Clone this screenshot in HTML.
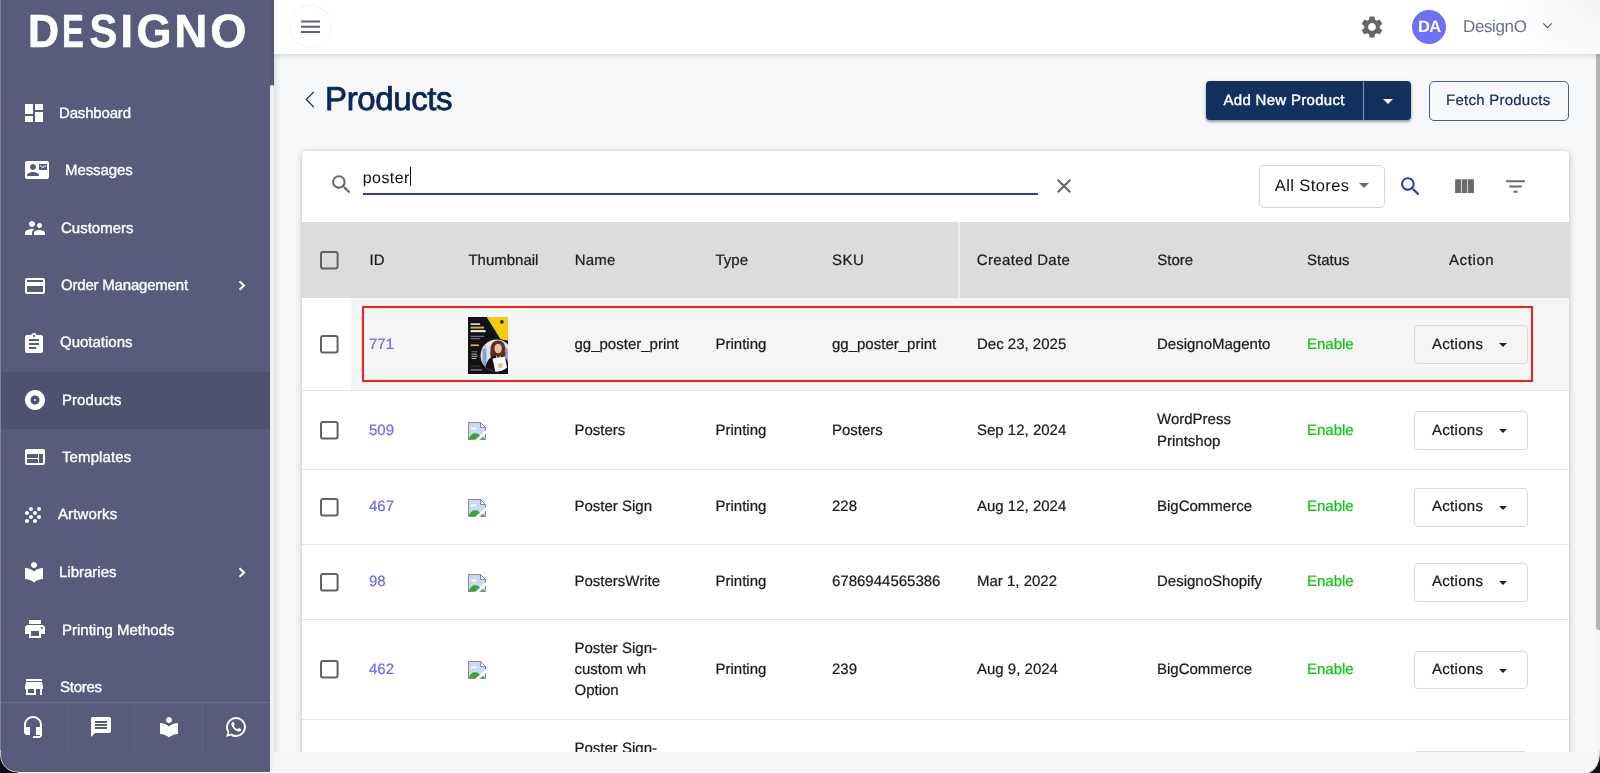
<!DOCTYPE html>
<html lang="en">
<head>
<meta charset="utf-8">
<title>Products - DesignO</title>
<style>
*{box-sizing:border-box;margin:0;padding:0}
html,body{width:1600px;height:773px;overflow:hidden;background:#fff}
body{font-family:"Liberation Sans",sans-serif;color:#212121;position:relative;text-rendering:geometricPrecision}
.abs{position:absolute}
svg{display:block}
/* sidebar */
#side{position:absolute;left:0;top:0;width:274px;height:773px;background:#585c7a;overflow:hidden}
#side .act{position:absolute;left:0;top:372px;width:270px;height:57px;background:#4e526f}
#side .lbl{will-change:transform;position:absolute;font-size:15px;line-height:20px;color:#fff;white-space:nowrap;-webkit-text-stroke:.35px #fff}
#side svg.ic{position:absolute;width:24px;height:24px;fill:#fff}
#side .thumb{position:absolute;left:270px;top:85px;width:4px;height:690px;background:#f1f1f3;border-radius:2px 2px 0 0}
#side .bar{position:absolute;left:0;top:702px;width:270px;height:50px;background:#585c7a;border-top:1px solid #6a6e8a}
#side .bar i{position:absolute;top:0;width:1px;height:50px;background:#606486}
/* topbar */
#top span{will-change:transform}
#top{position:absolute;left:274px;top:0;width:1326px;height:54px;background:radial-gradient(90px 80px at 100% 0,#f3f3f3,#fff);box-shadow:0 1px 6px rgba(0,0,0,.16)}
#main{position:absolute;left:274px;top:54px;width:1326px;height:698px;background:#f7f8fa;overflow:hidden}
#foot{position:absolute;left:274px;top:752px;width:1326px;height:21px;background:#f5f5f5}
#layer{position:absolute;left:0;top:0;width:1600px;height:752px;overflow:hidden;will-change:transform}
#ttl{left:325px;top:79.500px;font-size:33px;line-height:38px;color:#0c2659;white-space:nowrap;-webkit-text-stroke:.85px #0c2659;letter-spacing:-.38px}
#addb{left:1206px;top:81px;width:205px;height:39px;background:#13315f;border-radius:4px;box-shadow:0 2px 3px rgba(0,0,0,.3),0 1px 4px rgba(0,0,0,.15)}
#addb span{position:absolute;left:17.500px;top:9px;font-size:15px;line-height:21px;color:#fff;white-space:nowrap;-webkit-text-stroke:.4px #fff;letter-spacing:.3px}
#addb i{position:absolute;left:157px;top:0;width:1px;height:39px;background:#8a97b3}
#addb b{position:absolute;left:176.500px;top:17.500px;width:0;height:0;border-left:5.200px solid transparent;border-right:5.200px solid transparent;border-top:5.500px solid #fff}
#fetchb{left:1428.500px;top:81px;width:140.500px;height:39.500px;border:1px solid #4a5d8a;border-radius:5px}
#fetchb span{position:absolute;left:16.500px;top:8px;font-size:15px;line-height:21px;color:#0f2a5c;white-space:nowrap;letter-spacing:.25px;-webkit-text-stroke:.2px #0f2a5c}
#q{left:362.800px;top:168px;font-size:16px;line-height:21px;color:#111;letter-spacing:.42px}
#alls{left:1274.800px;top:175.500px;font-size:16.500px;line-height:20px;color:#131313;letter-spacing:.4px;white-space:nowrap}
/* card */
#card{position:absolute;left:302px;top:151px;width:1267px;height:640px;background:#fff;border-radius:4px 4px 0 0;box-shadow:0 2px 9px rgba(0,0,0,.2),0 0 2px rgba(0,0,0,.16)}
.t{position:absolute;margin-top:1px;white-space:nowrap;font-size:15px;line-height:21px;color:#1a1a1a;-webkit-text-stroke:.22px}
.id{color:#6b6bf0}
.en{color:#10c510}
.hr{position:absolute;left:302px;width:1267px;height:1px;background:#e5e5e5}
.cb{position:absolute;width:18.600px;height:18.600px;border:2px solid #626262;border-radius:3px}
.actb{position:absolute;left:1414px;width:113.500px;height:38.500px;border:1px solid #dadada;border-radius:4px;background:transparent}
.actb span{position:absolute;margin-top:1px;left:17px;top:8px;font-size:15px;line-height:21px;color:#1a1a1a;-webkit-text-stroke:.22px;letter-spacing:.3px}
.actb b{position:absolute;left:83.500px;top:17px;width:0;height:0;border-left:4.700px solid transparent;border-right:4.700px solid transparent;border-top:4.800px solid #222}
</style>
</head>
<body>
<div id="main"><div class="abs" style="left:0;top:0;width:7px;height:698px;background:linear-gradient(90deg,rgba(0,0,0,.10),rgba(0,0,0,0))"></div></div>
<div id="layer">
<svg class="abs" style="left:303px;top:90px" width="14" height="19" viewBox="0 0 14 19"><path d="M10.800 1.900L3.300 9.500 10.800 17.100" fill="none" stroke="#14305f" stroke-width="1.300"/></svg>
<span class="abs" id="ttl">Products</span>
<div class="abs" id="addb"><span>Add New Product</span><i></i><b></b></div>
<div class="abs" id="fetchb"><span>Fetch Products</span></div>
<div id="card"></div>
<svg class="abs" style="left:328.900px;top:171.900px;fill:#6a6a6a" width="25" height="25" viewBox="0 0 24 24"><path d="M15.500 14h-.79l-.28-.27C15.410 12.590 16 11.110 16 9.500 16 5.910 13.090 3 9.500 3S3 5.910 3 9.500 5.910 16 9.500 16c1.610 0 3.090-.59 4.230-1.570l.27.28v.79l5 4.990L20.490 19l-4.990-5zm-6 0C7.010 14 5 11.990 5 9.500S7.010 5 9.500 5 14 7.010 14 9.500 11.990 14 9.500 14z"/></svg>
<span class="abs" id="q">poster</span><div class="abs" style="left:410.300px;top:167.300px;width:1px;height:19px;background:#111"></div>
<div class="abs" style="left:363px;top:193px;width:675px;height:2px;background:#2a3db2"></div>
<svg class="abs" style="left:1052px;top:174.200px;fill:#666" width="24" height="24" viewBox="0 0 24 24"><path d="M19 6.410L17.590 5 12 10.590 6.410 5 5 6.410 10.590 12 5 17.590 6.410 19 12 13.410 17.590 19 19 17.590 13.410 12z"/></svg>
<div class="abs" style="left:1259px;top:165px;width:126px;height:42.500px;border:1px solid #d4d4d4;border-radius:5px"></div>
<span class="abs" id="alls">All Stores</span>
<svg class="abs" style="left:1352px;top:173.300px;fill:#6a6a6a" width="24" height="24" viewBox="0 0 24 24"><path d="M7 10l5 5 5-5z"/></svg>
<svg class="abs" style="left:1398.100px;top:173.800px;fill:#2a3db2" width="25" height="25" viewBox="0 0 24 24"><path d="M15.500 14h-.79l-.28-.27C15.410 12.590 16 11.110 16 9.500 16 5.910 13.090 3 9.500 3S3 5.910 3 9.500 5.910 16 9.500 16c1.610 0 3.090-.59 4.230-1.570l.27.28v.79l5 4.990L20.490 19l-4.990-5zm-6 0C7.010 14 5 11.990 5 9.500S7.010 5 9.500 5 14 7.010 14 9.500 11.990 14 9.500 14z"/></svg>
<svg class="abs" style="left:1451.600px;top:173.700px;fill:#6a6a6a" width="25" height="25" viewBox="0 0 24 24"><path d="M14.670 5v13.200H9.330V5h5.340zm.7 13.200H21V5h-5.630v13.200zm-6.740 0V5H3v13.200h5.630z"/></svg>
<svg class="abs" style="left:1503.100px;top:173.750px;fill:#6a6a6a" width="25" height="25" viewBox="0 0 24 24"><path d="M10 18h4v-2h-4v2zM3 6v2h18V6H3zm3 7h12v-2H6v2z"/></svg>
<div class="abs" style="left:302px;top:222px;width:1267px;height:76px;background:#dcdcdc"></div>
<div class="abs" style="left:958px;top:222px;width:1.500px;height:76px;background:#ebebeb"></div>
<svg class="abs" style="left:319.600px;top:250.700px" width="19" height="19" viewBox="0 0 19 19"><rect x="1" y="1" width="16.600" height="16.600" rx="2" fill="none" stroke="#626262" stroke-width="2"/></svg>
<span class="t" style="left:369.500px;top:249px">ID</span>
<span class="t" style="left:468.400px;top:249px">Thumbnail</span>
<span class="t" style="left:574.800px;top:249px;letter-spacing:.2px">Name</span>
<span class="t" style="left:715.500px;top:249px">Type</span>
<span class="t" style="left:832px;top:249px;letter-spacing:.5px">SKU</span>
<span class="t" style="left:976.800px;top:249px;letter-spacing:.35px">Created Date</span>
<span class="t" style="left:1157.300px;top:249px">Store</span>
<span class="t" style="left:1307px;top:249px">Status</span>
<span class="t" style="left:1449px;top:249px;letter-spacing:.6px">Action</span>
<!--rows-->
<div class="abs" style="left:351px;top:298px;width:1218px;height:92px;background:#f5f5f5"></div>
<div class="hr" style="top:390px"></div>
<svg class="abs" style="left:319.600px;top:334.9px" width="19" height="19" viewBox="0 0 19 19"><rect x="1" y="1" width="16.600" height="16.600" rx="2" fill="none" stroke="#626262" stroke-width="2"/></svg>
<span class="t id" style="left:369px;top:333px">771</span>
<svg class="abs" style="left:468px;top:316.500px" width="40" height="57" viewBox="0 0 40 57"><defs><clipPath id="pc"><circle cx="28.500" cy="38.500" r="16"/></clipPath></defs><rect width="40" height="57" fill="#111116"/><path d="M18.600 0H40v23.600c-3-.2-5.500-.7-7.600-1.500z" fill="#f2cc10"/><circle cx="33.900" cy="4.900" r="1.800" fill="#1a1a35"/><g clip-path="url(#pc)"><rect x="10" y="20" width="32" height="37" fill="#dde4ee"/><path d="M14.500 31h4v20h-4z" fill="#86a3d4"/><path d="M14.500 28c0-2 3-2 3.500 0v4h-3.500z" fill="#e6c3ae"/><path d="M36 30c3 0 5 3 5 8v12h-5z" fill="#9aa6bd"/><path d="M22.500 34c-.5-6 2.500-10.500 7.500-10.500s8 4 7 10c1 3 .5 6.500-1.500 8l-11 .5c-2.500-2-2.500-5.500-2-8z" fill="#5b2f22"/><ellipse cx="30.200" cy="31.500" rx="3.700" ry="4.800" fill="#ecbda4"/><path d="M17 57c0-10 3-17 10-18.500l3.500 2.500 3.500-2.500c5 1.500 7 7 7 18.500z" fill="#141418"/><path d="M28.200 38.500l2.300 3 2.300-3-.5 6h-3.600z" fill="#f1f1f4"/><path d="M24.500 41.500l12.500-2 2.500 13.500-12 2.500z" fill="#f6f8fb"/><path d="M30 47c2-1 4-1 5 0l-1 4h-4z" fill="#e9bda6"/></g><rect x="2.600" y="6.300" width="9.500" height="1.700" fill="#d9d9de"/><rect x="2.600" y="9.600" width="13.500" height="2" fill="#d8b611"/><rect x="2.600" y="13" width="15" height="2.200" fill="#e4e4e8"/><rect x="2.600" y="18.800" width="13.500" height="1" fill="#8c8c92"/><rect x="2.600" y="21.200" width="9.500" height="1" fill="#8c8c92"/><rect x="2.600" y="27.400" width="8.300" height="1.700" fill="#e0bd10"/><rect x="3.500" y="34.300" width="6" height=".9" fill="#77777d"/><rect x="3.500" y="36.600" width="5.500" height="1" fill="#b9b9be"/><rect x="3.500" y="38.800" width="6" height="1" fill="#b9b9be"/><rect x="3.500" y="41" width="5" height="1" fill="#b9b9be"/><rect x="2.600" y="48.500" width="9" height="1.500" fill="#3a2f16"/><rect x="2.600" y="52.300" width="11.500" height="1.200" fill="#8f8f95"/></svg>
<span class="t" style="left:574.500px;top:333px">gg_poster_print</span>
<span class="t" style="left:715.500px;top:333px">Printing</span>
<span class="t" style="left:832px;top:333px">gg_poster_print</span>
<span class="t" style="left:977px;top:333px">Dec 23, 2025</span>
<span class="t" style="left:1157px;top:333px">DesignoMagento</span>
<span class="t en" style="left:1307px;top:333px">Enable</span>
<div class="actb" style="top:325px"><span style="top:7.0px">Actions</span><b></b></div>
<div class="hr" style="top:469px"></div>
<svg class="abs" style="left:319.600px;top:420.9px" width="19" height="19" viewBox="0 0 19 19"><rect x="1" y="1" width="16.600" height="16.600" rx="2" fill="none" stroke="#626262" stroke-width="2"/></svg>
<span class="t id" style="left:369px;top:419px">509</span>
<svg class="abs" style="left:468px;top:421.5px" width="18" height="18" viewBox="0 0 18 18"><path d="M.5.500h12l5 5v12H.5z" fill="#c9daf8" stroke="#8a8a8a"/><path d="M12.500.500v5h5z" fill="#fff" stroke="#8a8a8a"/><path d="M2.800 7.200c.2-1.800 2-2.200 2.800-1.200.8-1.200 2.600-.8 2.700.6.700.1.700.6.400.6z" fill="#fff"/><path d="M1 17c1-5 5-6.500 8-5.500 2 .7 4 2.500 8 5.500z" fill="#3aa832"/><path d="M7 18L18 8v3.500L11.500 18z" fill="#fff"/></svg>
<span class="t" style="left:574.500px;top:419px">Posters</span>
<span class="t" style="left:715.500px;top:419px">Printing</span>
<span class="t" style="left:832px;top:419px">Posters</span>
<span class="t" style="left:977px;top:419px">Sep 12, 2024</span>
<span class="t" style="left:1157px;top:408px">WordPress</span>
<span class="t" style="left:1157px;top:430px">Printshop</span>
<span class="t en" style="left:1307px;top:419px">Enable</span>
<div class="actb" style="top:411px"><span style="top:7.0px">Actions</span><b></b></div>
<div class="hr" style="top:544px"></div>
<svg class="abs" style="left:319.600px;top:497.9px" width="19" height="19" viewBox="0 0 19 19"><rect x="1" y="1" width="16.600" height="16.600" rx="2" fill="none" stroke="#626262" stroke-width="2"/></svg>
<span class="t id" style="left:369px;top:495px">467</span>
<svg class="abs" style="left:468px;top:498.5px" width="18" height="18" viewBox="0 0 18 18"><path d="M.5.500h12l5 5v12H.5z" fill="#c9daf8" stroke="#8a8a8a"/><path d="M12.500.500v5h5z" fill="#fff" stroke="#8a8a8a"/><path d="M2.800 7.200c.2-1.800 2-2.200 2.800-1.200.8-1.200 2.600-.8 2.700.6.700.1.700.6.400.6z" fill="#fff"/><path d="M1 17c1-5 5-6.500 8-5.500 2 .7 4 2.500 8 5.500z" fill="#3aa832"/><path d="M7 18L18 8v3.500L11.500 18z" fill="#fff"/></svg>
<span class="t" style="left:574.500px;top:495px">Poster Sign</span>
<span class="t" style="left:715.500px;top:495px">Printing</span>
<span class="t" style="left:832px;top:495px">228</span>
<span class="t" style="left:977px;top:495px">Aug 12, 2024</span>
<span class="t" style="left:1157px;top:495px">BigCommerce</span>
<span class="t en" style="left:1307px;top:495px">Enable</span>
<div class="actb" style="top:488px"><span style="top:6.0px">Actions</span><b></b></div>
<div class="hr" style="top:619px"></div>
<svg class="abs" style="left:319.600px;top:572.9px" width="19" height="19" viewBox="0 0 19 19"><rect x="1" y="1" width="16.600" height="16.600" rx="2" fill="none" stroke="#626262" stroke-width="2"/></svg>
<span class="t id" style="left:369px;top:570px">98</span>
<svg class="abs" style="left:468px;top:573.5px" width="18" height="18" viewBox="0 0 18 18"><path d="M.5.500h12l5 5v12H.5z" fill="#c9daf8" stroke="#8a8a8a"/><path d="M12.500.500v5h5z" fill="#fff" stroke="#8a8a8a"/><path d="M2.800 7.200c.2-1.800 2-2.200 2.800-1.200.8-1.200 2.600-.8 2.700.6.700.1.700.6.400.6z" fill="#fff"/><path d="M1 17c1-5 5-6.500 8-5.500 2 .7 4 2.500 8 5.500z" fill="#3aa832"/><path d="M7 18L18 8v3.500L11.500 18z" fill="#fff"/></svg>
<span class="t" style="left:574.500px;top:570px">PostersWrite</span>
<span class="t" style="left:715.500px;top:570px">Printing</span>
<span class="t" style="left:832px;top:570px">6786944565386</span>
<span class="t" style="left:977px;top:570px">Mar 1, 2022</span>
<span class="t" style="left:1157px;top:570px">DesignoShopify</span>
<span class="t en" style="left:1307px;top:570px">Enable</span>
<div class="actb" style="top:563px"><span style="top:6.0px">Actions</span><b></b></div>
<div class="hr" style="top:719px"></div>
<svg class="abs" style="left:319.600px;top:660.4px" width="19" height="19" viewBox="0 0 19 19"><rect x="1" y="1" width="16.600" height="16.600" rx="2" fill="none" stroke="#626262" stroke-width="2"/></svg>
<span class="t id" style="left:369px;top:658px">462</span>
<svg class="abs" style="left:468px;top:661px" width="18" height="18" viewBox="0 0 18 18"><path d="M.5.500h12l5 5v12H.5z" fill="#c9daf8" stroke="#8a8a8a"/><path d="M12.500.500v5h5z" fill="#fff" stroke="#8a8a8a"/><path d="M2.800 7.200c.2-1.800 2-2.200 2.800-1.200.8-1.200 2.600-.8 2.700.6.700.1.700.6.400.6z" fill="#fff"/><path d="M1 17c1-5 5-6.500 8-5.500 2 .7 4 2.500 8 5.500z" fill="#3aa832"/><path d="M7 18L18 8v3.500L11.500 18z" fill="#fff"/></svg>
<span class="t" style="left:574.500px;top:637px">Poster Sign-</span>
<span class="t" style="left:574.500px;top:658px">custom wh</span>
<span class="t" style="left:574.500px;top:679px">Option</span>
<span class="t" style="left:715.500px;top:658px">Printing</span>
<span class="t" style="left:832px;top:658px">239</span>
<span class="t" style="left:977px;top:658px">Aug 9, 2024</span>
<span class="t" style="left:1157px;top:658px">BigCommerce</span>
<span class="t en" style="left:1307px;top:658px">Enable</span>
<div class="actb" style="top:650.5px"><span style="top:6.5px">Actions</span><b></b></div>
<div class="hr" style="top:819px"></div>
<svg class="abs" style="left:319.600px;top:760.4px" width="19" height="19" viewBox="0 0 19 19"><rect x="1" y="1" width="16.600" height="16.600" rx="2" fill="none" stroke="#626262" stroke-width="2"/></svg>
<span class="t id" style="left:369px;top:758px">461</span>
<svg class="abs" style="left:468px;top:761px" width="18" height="18" viewBox="0 0 18 18"><path d="M.5.500h12l5 5v12H.5z" fill="#c9daf8" stroke="#8a8a8a"/><path d="M12.500.500v5h5z" fill="#fff" stroke="#8a8a8a"/><path d="M2.800 7.200c.2-1.800 2-2.200 2.800-1.200.8-1.200 2.600-.8 2.700.6.700.1.700.6.400.6z" fill="#fff"/><path d="M1 17c1-5 5-6.500 8-5.500 2 .7 4 2.500 8 5.500z" fill="#3aa832"/><path d="M7 18L18 8v3.500L11.500 18z" fill="#fff"/></svg>
<span class="t" style="left:574.500px;top:737px">Poster Sign-</span>
<span class="t" style="left:574.500px;top:758px">custom wh</span>
<span class="t" style="left:574.500px;top:779px">Option 2</span>
<span class="t" style="left:715.500px;top:758px">Printing</span>
<span class="t" style="left:832px;top:758px">238</span>
<span class="t" style="left:977px;top:758px">Aug 9, 2024</span>
<span class="t" style="left:1157px;top:758px">BigCommerce</span>
<span class="t en" style="left:1307px;top:758px">Enable</span>
<div class="actb" style="top:750.5px"><span style="top:6.5px">Actions</span><b></b></div>
<!--/rows-->
<div class="abs" style="left:362px;top:306px;width:1171px;height:76px;border:2px solid #fb1b0f"></div>
<div class="abs" style="left:1596px;top:54px;width:4px;height:698px;background:#f4f4f4"></div><div class="abs" style="left:1595.700px;top:54px;width:5px;height:576px;background:#b4b4b4;border-radius:0 0 0 3px"></div>
</div>
<div id="top">
<div class="abs" style="left:14.500px;top:5px;width:43px;height:43px;border:1px solid #f0f0f5;border-radius:50%"></div>
<svg class="abs" style="left:27px;top:20px" width="19" height="14" viewBox="0 0 19 14"><path d="M0 1.500h19M0 6.750h19M0 12h19" stroke="#5a5e80" stroke-width="2" fill="none"/></svg>
<svg class="abs" style="left:1084.700px;top:13.700px;fill:#666" width="26" height="26" viewBox="0 0 24 24"><path d="M19.140 12.940c.04-.3.06-.61.06-.94 0-.32-.02-.64-.07-.94l2.030-1.580c.18-.14.23-.41.12-.61l-1.920-3.320c-.12-.22-.37-.29-.59-.22l-2.390.96c-.5-.38-1.030-.7-1.620-.94l-.36-2.540c-.04-.24-.24-.41-.48-.41h-3.840c-.24 0-.43.17-.47.41l-.36 2.540c-.59.24-1.130.57-1.620.94l-2.390-.96c-.22-.08-.47 0-.59.22L2.740 8.870c-.12.21-.08.47.12.61l2.030 1.580c-.05.3-.09.63-.09.94s.02.64.07.94l-2.030 1.580c-.18.14-.23.41-.12.610l1.920 3.320c.12.22.37.29.59.22l2.390-.96c.5.38 1.030.7 1.620.94l.36 2.540c.05.24.24.41.48.41h3.840c.24 0 .44-.17.47-.41l.36-2.540c.59-.24 1.130-.56 1.620-.94l2.390.96c.22.08.47 0 .59-.22l1.920-3.320c.12-.22.07-.47-.12-.61l-2.010-1.580zM12 15.600c-1.980 0-3.600-1.620-3.600-3.600s1.620-3.600 3.600-3.600 3.600 1.620 3.600 3.600-1.620 3.600-3.600 3.600z"/></svg>
<div class="abs" style="left:1138.400px;top:9.800px;width:34px;height:34px;border-radius:50%;background:#7070f5"></div>
<span class="abs" style="left:1143.600px;top:18.300px;font-size:16.500px;line-height:18px;font-weight:bold;color:#fff;letter-spacing:-.6px">DA</span>
<span class="abs" style="left:1188.500px;top:16.800px;font-size:17px;line-height:20px;color:#6b6f8c;letter-spacing:-.38px;white-space:nowrap">DesignO</span>
<svg class="abs" style="left:1267px;top:21px" width="13" height="10" viewBox="0 0 13 10"><path d="M2.300 2.400L6.500 6.600 10.700 2.400" fill="none" stroke="#5a5e80" stroke-width="1.300"/></svg>
</div>
<div id="foot"></div>
<div id="side">
<svg class="abs" style="left:0;top:0;will-change:transform" width="274" height="60" viewBox="0 0 274 60"><text y="47.400" font-family="Liberation Sans, sans-serif" font-weight="bold" font-size="46.6" fill="#fff" stroke="#fff" stroke-width=".6"><tspan x="27.92" textLength="31.09" lengthAdjust="spacingAndGlyphs">D</tspan><tspan x="62.11" textLength="21.88" lengthAdjust="spacingAndGlyphs">E</tspan><tspan x="89.60" textLength="27.72" lengthAdjust="spacingAndGlyphs">S</tspan><tspan x="120.19" textLength="12.92" lengthAdjust="spacingAndGlyphs">I</tspan><tspan x="136.45" textLength="35.04" lengthAdjust="spacingAndGlyphs">G</tspan><tspan x="174.24" textLength="33.04" lengthAdjust="spacingAndGlyphs">N</tspan><tspan x="210.39" textLength="36.27" lengthAdjust="spacingAndGlyphs">O</tspan></text></svg>
<div class="act"></div>
<svg class="ic" style="left:22px;top:101px" viewBox="0 0 24 24"><path d="M3 13h8V3H3v10zm0 8h8v-6H3v6zm10 0h8V11h-8v10zm0-18v6h8V3h-8z"/></svg>
<span class="lbl" style="left:59.300px;top:104px;letter-spacing:-.17px">Dashboard</span>
<svg class="ic" style="left:25px;top:158px" viewBox="0 0 24 24"><path d="M21 8V7l-3 2-3-2v1l3 2 3-2zm1-5H2C.9 3 0 3.900 0 5v14c0 1.100.9 2 2 2h20c1.100 0 1.990-.9 1.990-2L24 5c0-1.100-.9-2-2-2zM8 6c1.660 0 3 1.340 3 3s-1.340 3-3 3-3-1.340-3-3 1.340-3 3-3zm6 12H2v-1c0-2 4-3.100 6-3.100s6 1.100 6 3.100v1zm8-6h-8V6h8v6z"/></svg>
<span class="lbl" style="left:65.100px;top:161px;letter-spacing:-.08px">Messages</span>
<svg class="ic" style="left:23px;top:216px" viewBox="0 0 24 24"><path d="M16.500 12c1.380 0 2.490-1.120 2.490-2.500S17.880 7 16.500 7C15.120 7 14 8.120 14 9.500s1.120 2.500 2.500 2.500zM9 11c1.660 0 2.990-1.340 2.990-3S10.660 5 9 5C7.340 5 6 6.340 6 8s1.340 3 3 3zm7.500 3c-1.830 0-5.500.92-5.500 2.750V19h11v-2.250c0-1.830-3.670-2.750-5.500-2.750zM9 13c-2.330 0-7 1.170-7 3.500V19h7v-2.250c0-.85.33-2.340 2.370-3.470C10.500 13.100 9.660 13 9 13z"/></svg>
<span class="lbl" style="left:61px;top:219px">Customers</span>
<svg class="ic" style="left:23px;top:273.500px" viewBox="0 0 24 24"><path d="M20 4H4c-1.110 0-1.990.89-1.990 2L2 18c0 1.110.89 2 2 2h16c1.110 0 2-.89 2-2V6c0-1.110-.89-2-2-2zm0 14H4v-6h16v6zm0-10H4V6h16v2z"/></svg>
<span class="lbl" style="left:61px;top:276px;letter-spacing:-.2px">Order Management</span>
<svg class="abs" style="left:236px;top:279px" width="12" height="13" viewBox="0 0 12 13"><path d="M3.500 2.300L8 6.500 3.500 10.700" fill="none" stroke="#fff" stroke-width="2"/></svg>
<svg class="ic" style="left:22px;top:331.500px" viewBox="0 0 24 24"><path d="M19 3h-4.180C14.400 1.840 13.300 1 12 1c-1.300 0-2.400.84-2.820 2H5c-1.100 0-2 .9-2 2v14c0 1.100.9 2 2 2h14c1.100 0 2-.9 2-2V5c0-1.100-.9-2-2-2zm-7 0c.55 0 1 .45 1 1s-.45 1-1 1-1-.45-1-1 .45-1 1-1zm2 14H7v-2h7v2zm3-4H7v-2h10v2zm0-4H7V7h10v2z"/></svg>
<span class="lbl" style="left:59.5px;top:333px">Quotations</span>
<svg class="ic" style="left:23px;top:387.500px" viewBox="0 0 24 24"><path d="M12 2C6.480 2 2 6.480 2 12s4.480 10 10 10 10-4.480 10-10S17.520 2 12 2zm0 14.500c-2.490 0-4.500-2.010-4.500-4.500S9.510 7.500 12 7.500s4.500 2.010 4.500 4.500-2.010 4.500-4.500 4.500zm0-5.500c-.55 0-1 .45-1 1s.45 1 1 1 1-.45 1-1-.45-1-1-1z"/></svg>
<span class="lbl" style="left:61.600px;top:391px;letter-spacing:.05px">Products</span>
<svg class="ic" style="left:23px;top:444.500px" viewBox="0 0 24 24"><path d="M20 4H4c-1.100 0-1.990.9-1.990 2L2 18c0 1.100.9 2 2 2h16c1.100 0 2-.9 2-2V6c0-1.100-.9-2-2-2zm-5 14H4v-4h11v4zm0-5H4V9h11v4zm5 5h-4V9h4v9z"/></svg>
<span class="lbl" style="left:62px;top:448px;letter-spacing:.1px">Templates</span>
<svg class="ic" style="left:21px;top:502.500px" viewBox="0 0 24 24"><path d="M10 12c-1.100 0-2 .9-2 2s.9 2 2 2 2-.9 2-2-.9-2-2-2zM6 8c-1.100 0-2 .9-2 2s.9 2 2 2 2-.9 2-2-.9-2-2-2zm0 8c-1.100 0-2 .9-2 2s.9 2 2 2 2-.9 2-2-.9-2-2-2zm12-8c1.100 0 2-.9 2-2s-.9-2-2-2-2 .9-2 2 .9 2 2 2zm-4 8c-1.100 0-2 .9-2 2s.9 2 2 2 2-.9 2-2-.9-2-2-2zm4-4c-1.100 0-2 .9-2 2s.9 2 2 2 2-.9 2-2-.9-2-2-2zm-4-4c-1.100 0-2 .9-2 2s.9 2 2 2 2-.9 2-2-.9-2-2-2zm-4-4c-1.100 0-2 .9-2 2s.9 2 2 2 2-.9 2-2-.9-2-2-2z"/></svg>
<span class="lbl" style="left:57.800px;top:505px;letter-spacing:.12px">Artworks</span>
<svg class="ic" style="left:22px;top:560px" viewBox="0 0 24 24"><path d="M12 11.550C9.640 9.350 6.480 8 3 8v11c3.480 0 6.640 1.350 9 3.550 2.360-2.190 5.520-3.550 9-3.550V8c-3.480 0-6.640 1.350-9 3.550zM12 8c1.660 0 3-1.340 3-3s-1.340-3-3-3-3 1.340-3 3 1.340 3 3 3z"/></svg>
<span class="lbl" style="left:59.100px;top:562.6px">Libraries</span>
<svg class="abs" style="left:236px;top:565.500px" width="12" height="13" viewBox="0 0 12 13"><path d="M3.500 2.300L8 6.500 3.500 10.700" fill="none" stroke="#fff" stroke-width="2"/></svg>
<svg class="ic" style="left:23px;top:617px" viewBox="0 0 24 24"><path d="M19 8H5c-1.660 0-3 1.340-3 3v6h4v4h12v-4h4v-6c0-1.660-1.340-3-3-3zm-3 11H8v-5h8v5zm3-7c-.55 0-1-.45-1-1s.45-1 1-1 1 .45 1 1-.45 1-1 1zm-1-9H6v4h12V3z"/></svg>
<span class="lbl" style="left:61.500px;top:620.6px">Printing Methods</span>
<svg class="ic" style="left:22px;top:674.500px" viewBox="0 0 24 24"><path d="M20 4H4v2h16V4zm1 10v-2l-1-5H4l-1 5v2h1v6h10v-6h4v6h2v-6h1zm-9 4H6v-4h6v4z"/></svg>
<span class="lbl" style="left:59.500px;top:678px;letter-spacing:-.25px">Stores</span>
<div class="bar"><i style="left:67px"></i><i style="left:134px"></i><i style="left:202px"></i>
<svg class="ic" style="left:21.100px;top:11.500px" viewBox="0 0 24 24"><path d="M12 1c-4.970 0-9 4.030-9 9v7c0 1.660 1.340 3 3 3h3v-8H5v-2c0-3.870 3.130-7 7-7s7 3.130 7 7v2h-4v8h4v1h-7v2h6c1.660 0 3-1.340 3-3V10c0-4.970-4.030-9-9-9z"/></svg>
<svg class="ic" style="left:89.300px;top:11.900px" viewBox="0 0 24 24"><path d="M20 2H4c-1.100 0-1.990.9-1.990 2L2 22l4-4h14c1.100 0 2-.9 2-2V4c0-1.100-.9-2-2-2zm-2 12H6v-2h12v2zm0-3H6V9h12v2zm0-3H6V6h12v2z"/></svg>
<svg class="ic" style="left:156.600px;top:11.900px" viewBox="0 0 24 24"><path d="M12 11.550C9.640 9.350 6.480 8 3 8v11c3.480 0 6.640 1.350 9 3.550 2.360-2.190 5.520-3.550 9-3.550V8c-3.480 0-6.640 1.350-9 3.550zM12 8c1.660 0 3-1.340 3-3s-1.340-3-3-3-3 1.340-3 3 1.340 3 3 3z"/></svg>
<svg class="ic" style="left:223.900px;top:11.600px" viewBox="0 0 24 24"><path d="M16.750 13.960c.25.13.41.2.46.3.06.11.04.61-.21 1.180-.2.56-1.240 1.100-1.700 1.120-.46.02-.47.36-2.960-.73-2.490-1.090-3.990-3.750-4.110-3.920-.12-.17-.96-1.380-.92-2.610.05-1.220.69-1.800.95-2.040.24-.26.51-.29.68-.26h.47c.15 0 .36-.06.55.45l.69 1.870c.06.13.1.28.01.44l-.27.41-.39.42c-.12.12-.26.25-.12.500.12.26.62 1.090 1.320 1.780.91.88 1.710 1.170 1.950 1.300.24.14.39.12.54-.04l.81-.94c.19-.25.35-.19.58-.11l1.670.88M12 2a10 10 0 0 1 10 10 10 10 0 0 1-10 10c-1.970 0-3.800-.57-5.350-1.550L2 22l1.550-4.650A9.969 9.969 0 0 1 2 12 10 10 0 0 1 12 2m0 2a8 8 0 0 0-8 8c0 1.720.54 3.310 1.460 4.610L4.500 19.500l2.890-.96A7.950 7.950 0 0 0 12 20a8 8 0 0 0 8-8 8 8 0 0 0-8-8z"/></svg>
</div>
<div class="abs" style="left:270px;top:0;width:4px;height:86px;background:linear-gradient(90deg,#54587a 0,#54587a 80%,#3f456c 100%)"></div><div class="thumb"></div><div class="abs" style="left:0;top:0;width:1px;height:760px;background:#7f8299"></div>
</div>
<div class="abs" style="left:0;top:771.700px;width:1600px;height:2px;background:#fff"></div>
<svg class="abs" style="left:0;top:750px" width="20" height="23" viewBox="0 0 20 23"><path d="M0 0v23h18v-1.300C8 21.700.800 15 .800 4V0z" fill="#0d0d16"/><path d="M.500 0v4C.500 15 8 22 18 22" fill="none" stroke="#c9c9cf" stroke-width="1"/></svg>
<svg class="abs" style="left:1580px;top:748px" width="20" height="25" viewBox="0 0 20 25"><path d="M20 3v22H8.500C15 22.500 19.400 15.500 19.600 5z" fill="#170f14"/><path d="M19.400 3v2C19.200 15.500 14.500 22.500 7.500 25" fill="none" stroke="#d5d5d8" stroke-width="1.200"/></svg>
</body>
</html>
